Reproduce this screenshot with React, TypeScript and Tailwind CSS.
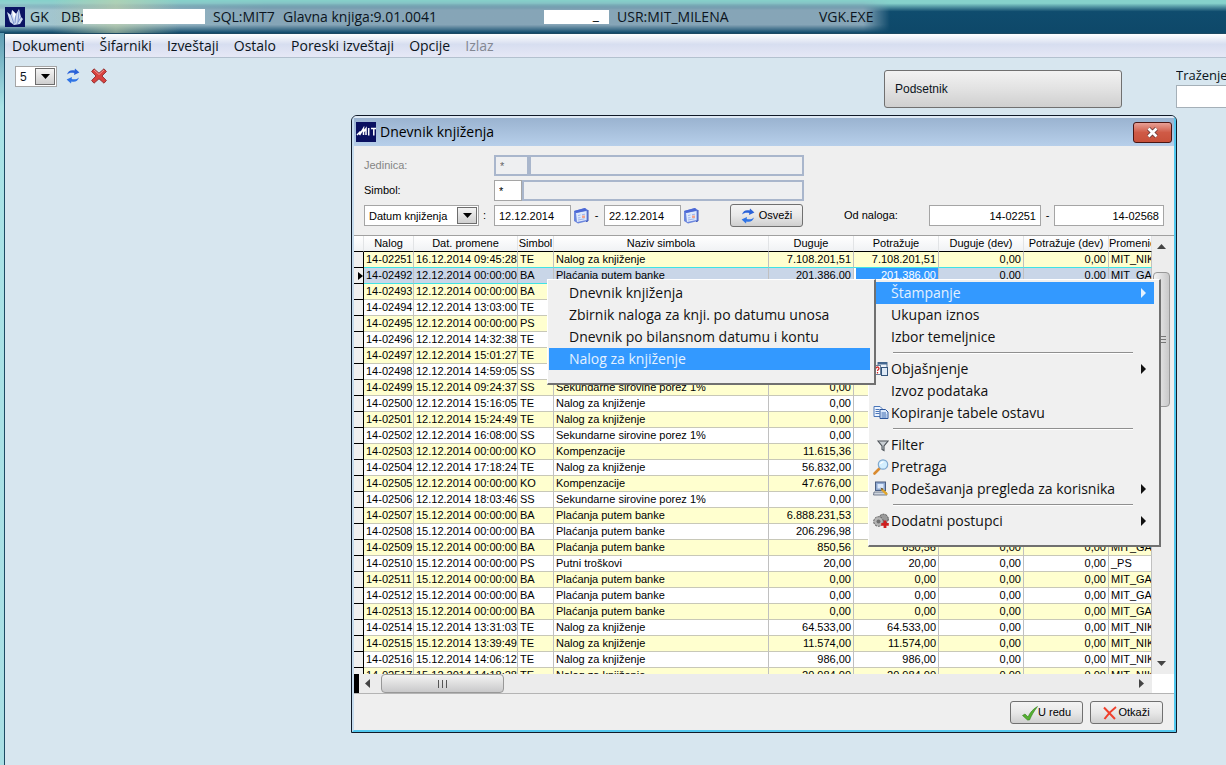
import type { ReactNode } from 'react';

interface LedgerRow {
  id: string;
  date: string;
  code: string;
  amount: string;
}

const NAMES: Record<string, string> = {
  TE: 'Nalog za knjiženje',
  BA: 'Plaćanja putem banke',
  PS: 'Putni troškovi',
  SS: 'Sekundarne sirovine porez 1%',
  KO: 'Kompenzacije',
};

const USERS: Record<string, string> = {
  TE: 'MIT_NIKOLA',
  BA: 'MIT_GAGA',
  PS: '_PS',
  SS: 'MIT_NIKOLA',
  KO: 'MIT_NIKOLA',
};

const rows: LedgerRow[] = [
  { id: '14-02251', date: '16.12.2014 09:45:28', code: 'TE', amount: '7.108.201,51' },
  { id: '14-02492', date: '12.12.2014 00:00:00', code: 'BA', amount: '201.386,00' },
  { id: '14-02493', date: '12.12.2014 00:00:00', code: 'BA', amount: '0,00' },
  { id: '14-02494', date: '12.12.2014 13:03:00', code: 'TE', amount: '0,00' },
  { id: '14-02495', date: '12.12.2014 00:00:00', code: 'PS', amount: '0,00' },
  { id: '14-02496', date: '12.12.2014 14:32:38', code: 'TE', amount: '0,00' },
  { id: '14-02497', date: '12.12.2014 15:01:27', code: 'TE', amount: '0,00' },
  { id: '14-02498', date: '12.12.2014 14:59:05', code: 'SS', amount: '0,00' },
  { id: '14-02499', date: '15.12.2014 09:24:37', code: 'SS', amount: '0,00' },
  { id: '14-02500', date: '12.12.2014 15:16:05', code: 'TE', amount: '0,00' },
  { id: '14-02501', date: '12.12.2014 15:24:49', code: 'TE', amount: '0,00' },
  { id: '14-02502', date: '12.12.2014 16:08:00', code: 'SS', amount: '0,00' },
  { id: '14-02503', date: '12.12.2014 00:00:00', code: 'KO', amount: '11.615,36' },
  { id: '14-02504', date: '12.12.2014 17:18:24', code: 'TE', amount: '56.832,00' },
  { id: '14-02505', date: '12.12.2014 00:00:00', code: 'KO', amount: '47.676,00' },
  { id: '14-02506', date: '12.12.2014 18:03:46', code: 'SS', amount: '0,00' },
  { id: '14-02507', date: '15.12.2014 00:00:00', code: 'BA', amount: '6.888.231,53' },
  { id: '14-02508', date: '15.12.2014 00:00:00', code: 'BA', amount: '206.296,98' },
  { id: '14-02509', date: '15.12.2014 00:00:00', code: 'BA', amount: '850,56' },
  { id: '14-02510', date: '15.12.2014 00:00:00', code: 'PS', amount: '20,00' },
  { id: '14-02511', date: '15.12.2014 00:00:00', code: 'BA', amount: '0,00' },
  { id: '14-02512', date: '15.12.2014 00:00:00', code: 'BA', amount: '0,00' },
  { id: '14-02513', date: '15.12.2014 00:00:00', code: 'BA', amount: '0,00' },
  { id: '14-02514', date: '15.12.2014 13:31:03', code: 'TE', amount: '64.533,00' },
  { id: '14-02515', date: '15.12.2014 13:39:49', code: 'TE', amount: '11.574,00' },
  { id: '14-02516', date: '15.12.2014 14:06:12', code: 'TE', amount: '986,00' },
  { id: '14-02517', date: '15.12.2014 14:18:28', code: 'TE', amount: '20.984,00' },
];

const mainMenu = ['Dokumenti', 'Šifarniki', 'Izveštaji', 'Ostalo', 'Poreski izveštaji', 'Opcije'];

const RefreshIcon = () => (
  <svg viewBox="0 0 14 16" className="h-4 w-3.5 shrink-0" aria-hidden="true">
    <path d="M1 6.5C2 3 5 1.6 8.6 2.6L9 .6 13.4 4.4 8 7l.3-2C5.600 4.200 3 4.700 1 6.500Z" fill="#2a62d8" />
    <path d="M13 9.500C12 13 9 14.400 5.400 13.400L5 15.400.6 11.600 6 9l-.3 2c2.700.8 5.300.3 7.300-1.500Z" fill="#2f74e6" />
  </svg>
);

const CalendarIcon = () => (
  <svg viewBox="0 0 16 17" className="h-[17px] w-4" aria-hidden="true">
    <path d="M1 4 12 1l3 2v11L5 16.500 1 14Z" fill="#6c86dd" />
    <path d="M3 6 13.500 4v9L4 15Z" fill="#dfe9fc" />
    <path d="M1 4 12 1l2 2.400L3 6Z" fill="#4c68d6" />
    <path d="M5 8.500 7.500 8m1.500-.3 3-.5M5 11l2.500-.4M5 13l6.500-1.200" stroke="#9db5ee" />
    <rect x="9" y="8.500" width="3" height="2.500" fill="#f3a38e" />
    <path d="M15 3v11l-2 .6" stroke="#3f56b8" fill="none" />
  </svg>
);

const CrystalLogo = () => (
  <svg viewBox="0 0 20 20" className="h-5 w-5 shrink-0" aria-hidden="true">
    <rect width="20" height="20" fill="#0b1463" />
    <path d="M2 5l4 3 1-5 4 4 3-5 2 8 2 2-3 5-6 1-4-3Z" fill="#cfdcf2" />
    <path d="M6 8l3 9M11 7l-1 9M14 4l-1 11M16 10l-4 7" stroke="#7f96cf" fill="none" />
    <path d="M7 3l4 4-2 5Z" fill="#fff" />
  </svg>
);

const MitLogo = () => (
  <svg viewBox="0 0 20 20" className="h-5 w-5 shrink-0" aria-hidden="true">
    <rect width="20" height="20" fill="#0a1060" />
    <path d="M1 13 4.500 9.500M3.500 13 7.500 6.500V13M7.500 10l2.500-3.500V13M12.700 6v7.500M15 6.500h5M17.800 6.500v7" stroke="#fff" strokeWidth="1.500" fill="none" />
  </svg>
);

const GlossyCross = () => (
  <svg viewBox="0 0 16 16" className="h-4 w-4" aria-hidden="true">
    <path d="M3 .8 8 5.200 13 .8 15.400 3.500 11 8l4.400 4.500L13 15.200 8 10.800 3 15.200.6 12.500 5 8 .6 3.500Z" fill="#d8423f" stroke="#8f2a2a" strokeWidth=".9" />
    <path d="M3 2 8 6.500 13 2" stroke="#f2918b" fill="none" />
  </svg>
);

const CheckIcon = () => (
  <svg viewBox="0 0 16 16" className="h-4 w-4" aria-hidden="true">
    <path d="M.5 10.500 3 9l3 3C8 7.500 11 4 15.500 1.500 12 6 9.500 10.500 7.500 15H5.500Z" fill="#55b030" stroke="#33801c" strokeWidth=".6" />
  </svg>
);

const RedCross = () => (
  <svg viewBox="0 0 14 14" className="h-3.5 w-3.5" aria-hidden="true">
    <path d="M1 1.500 12 13M13 1C9 4 5 8 1.500 13" stroke="#f0402c" strokeWidth="2" fill="none" />
  </svg>
);

const ExplainIcon = () => (
  <svg viewBox="0 0 16 16" className="h-4 w-4" aria-hidden="true">
    <rect x="5" y="1.500" width="9" height="9" fill="#eef4fb" stroke="#4f6f8f" />
    <rect x="5" y="1" width="9" height="2.500" fill="#44678f" />
    <rect x="1.500" y="4.500" width="6" height="9" fill="#fff" stroke="#6a7f98" />
    <path d="M3 7.500c0-2 3-2 3 0 0 1-1.500 1-1.500 2.500M4.500 11v1.500" stroke="#d02a2a" strokeWidth="1.300" fill="none" />
    <rect x="8.500" y="6.500" width="6" height="8" fill="#dfeaf6" stroke="#34557c" />
  </svg>
);

const CopyIcon = () => (
  <svg viewBox="0 0 16 16" className="h-4 w-4" aria-hidden="true">
    <path d="M1 1.500h6l2 2v8H1Z" fill="#eef5ff" stroke="#4b76b8" />
    <path d="M2.500 4.500h4M2.500 6.500h4M2.500 8.500h4" stroke="#4b76b8" />
    <path d="M7 4.500h5.500l2.500 2.500v6.500H7Z" fill="#dce9fb" stroke="#2c569c" />
    <path d="M8.500 8h4.500M8.500 10h5M8.500 12h5" stroke="#3a68b0" />
  </svg>
);

const FilterIcon = () => (
  <svg viewBox="0 0 16 16" className="h-4 w-4" aria-hidden="true">
    <path d="M5 4h10l-4 5v4.500l-2-1V9Z" fill="#c9ced3" stroke="#4c5258" strokeWidth="1.100" />
    <path d="M6 4.300h8" stroke="#8c9298" />
  </svg>
);

const SearchIcon = () => (
  <svg viewBox="0 0 16 16" className="h-4 w-4" aria-hidden="true">
    <path d="M1.500 14.500 6.500 9.500" stroke="#d98a2e" strokeWidth="2.600" strokeLinecap="round" />
    <circle cx="10" cy="5.500" r="4.700" fill="#d3efff" stroke="#7fa8cf" strokeWidth="1.200" />
    <path d="M7.500 5c.4-1.500 1.500-2.300 3-2.200" stroke="#fff" strokeWidth="1.200" fill="none" />
  </svg>
);

const SettingsIcon = () => (
  <svg viewBox="0 0 16 16" className="h-4 w-4" aria-hidden="true">
    <rect x="2.500" y="1" width="10" height="8.500" fill="#8ea8d0" stroke="#4a5d80" />
    <rect x="4.500" y="3" width="6" height="4.500" fill="#dbe8fb" />
    <path d="M1 11h12l1 3H.5Z" fill="#cfd5de" stroke="#59657a" strokeWidth=".8" />
    <path d="M8.500 8 14 13.500" stroke="#e3a628" strokeWidth="2.400" />
    <path d="M7.500 6.500 9 9.200l1.200-1.400Z" fill="#5a4a24" />
  </svg>
);

const GearsIcon = () => (
  <svg viewBox="0 0 16 16" className="h-4 w-4" aria-hidden="true">
    <circle cx="10.500" cy="6" r="4.800" fill="#9a9a9a" stroke="#4d4d4d" strokeDasharray="2 1" />
    <circle cx="5.500" cy="8.500" r="4.800" fill="#b5b5b5" stroke="#555" strokeDasharray="2 1" />
    <circle cx="5.500" cy="8.500" r="2" fill="#707070" />
    <path d="M12 7.500v7.500M8.300 11.300h7.500" stroke="#cf1f1f" strokeWidth="2.800" />
  </svg>
);

const CaretButton = () => (
  <span className="pointer-events-none absolute inset-y-0.5 right-0.5 flex w-5 items-center justify-center border border-[#6d6d6d] bg-gradient-to-b from-[#f4f4f4] to-[#cfcfcf]">
    <svg viewBox="0 0 9 5" className="h-[5px] w-[9px]" aria-hidden="true">
      <path d="M0 0h9L4.500 5Z" fill="#000" />
    </svg>
  </span>
);

interface MenuEntryProps {
  label: string;
  icon?: ReactNode;
  active?: boolean;
  arrow?: boolean;
}

const MenuEntry = ({ label, icon, active, arrow }: MenuEntryProps) => (
  <button
    type="button"
    role="menuitem"
    className={`flex h-[22px] w-full items-center pr-2 text-left ${
      active ? 'bg-[#3399ff] text-[#e4f1ff]' : 'text-[#111111]'
    }`}
  >
    <span className="flex w-5 shrink-0 items-center pl-0.5">{icon}</span>
    <span className="grow whitespace-nowrap">{label}</span>
    {arrow && (
      <svg viewBox="0 0 5 10" className="h-2.5 w-[5px] fill-current" aria-hidden="true">
        <path d="M0 0v10l5-5Z" />
      </svg>
    )}
  </button>
);

const MenuLine = () => <div role="separator" className="my-[4px] mr-[21px] ml-[22px] h-0.5 border-t border-[#8f8f8f] bg-white" />;

const fieldBox = 'h-[21px] border border-[#a5a5a5] bg-white px-1 text-[11px] leading-4';
const lockedBox = 'h-[21px] border-2 border-[#a9b6cc] bg-[#eeeff1] px-1 text-[11px] leading-4';
const pushButton =
  'flex h-[23px] items-center justify-center rounded-[3px] border border-[#707070] bg-gradient-to-b from-[#f4f4f4] via-[#e8e8e8] to-[#cfcfcf] text-[11px]';

const DialogFilters = () => (
  <form className="flex flex-col gap-1 px-2.5 pt-[9px] pb-[9px] text-[11px]">
    <div className="flex h-[21px] items-center">
      <label htmlFor="unit" className="w-[130px] text-[#858585]">Jedinica:</label>
      <input id="unit" disabled defaultValue="*" className={`${lockedBox} w-[35px] text-[#666666]`} />
      <input aria-label="Naziv jedinice" disabled className={`${lockedBox} w-[275px]`} />
    </div>
    <div className="flex h-[21px] items-center">
      <label htmlFor="symbol" className="w-[130px]">Simbol:</label>
      <input id="symbol" defaultValue="*" className={`${fieldBox} w-7`} />
      <input aria-label="Naziv simbola" disabled className={`${lockedBox} w-[282px]`} />
    </div>
    <div className="flex h-[21px] items-center">
      <div className="flex w-[130px] items-center gap-1">
        <div className="relative">
          <select aria-label="Vrsta datuma" className={`${fieldBox} block w-[115px] appearance-none`}>
            <option>Datum knjiženja</option>
          </select>
          <CaretButton />
        </div>
        <span>:</span>
      </div>
      <input aria-label="Datum od" defaultValue="12.12.2014" className={`${fieldBox} w-[77px]`} />
      <button type="button" aria-label="Izaberi datum od" className="ml-0.5"><CalendarIcon /></button>
      <span className="w-[15px] text-center">-</span>
      <input aria-label="Datum do" defaultValue="22.12.2014" className={`${fieldBox} w-[77px]`} />
      <button type="button" aria-label="Izaberi datum do" className="ml-0.5"><CalendarIcon /></button>
      <button type="button" className={`${pushButton} ml-[31px] w-[73px] gap-1`}>
        <RefreshIcon />
        Osveži
      </button>
      <label htmlFor="order-from" className="ml-auto w-[85px]">Od naloga:</label>
      <input id="order-from" defaultValue="14-02251" className={`${fieldBox} w-28 text-right`} />
      <span className="w-[13px] text-center">-</span>
      <input aria-label="Do naloga" defaultValue="14-02568" className={`${fieldBox} w-[110px] text-right`} />
    </div>
  </form>
);

const LedgerTable = () => (
  <table className="w-[798px] table-fixed border-separate border-spacing-0 text-[11px] leading-[15px] whitespace-nowrap">
    <colgroup>
      <col className="w-2.5" />
      <col className="w-[50px]" />
      <col className="w-[104px]" />
      <col className="w-9" />
      <col className="w-[215px]" />
      <col className="w-[85px]" />
      <col className="w-[85px]" />
      <col className="w-[85px]" />
      <col className="w-[85px]" />
      <col className="w-[43px]" />
    </colgroup>
    <thead>
      <tr className="h-4 [&>th]:overflow-hidden [&>th]:border-r [&>th]:border-b [&>th]:border-r-[#e2e4e6] [&>th]:border-b-black [&>th]:bg-gradient-to-b [&>th]:from-white [&>th]:to-[#f0f2f4] [&>th]:p-0 [&>th]:font-normal">
        <th aria-label="Red" />
        <th>Nalog</th>
        <th>Dat. promene</th>
        <th>Simbol</th>
        <th>Naziv simbola</th>
        <th>Duguje</th>
        <th>Potražuje</th>
        <th>Duguje (dev)</th>
        <th>Potražuje (dev)</th>
        <th className="text-left">Promenio</th>
      </tr>
    </thead>
    <tbody>
      {rows.map((row, i) => {
        const selected = i === 1;
        const tone = selected
          ? 'bg-[#c9d6e8] [&>td]:border-b-[#3fe3e6]'
          : i === 0
            ? 'bg-[#ffffcf] [&>td]:border-b-[#3fe3e6]'
            : i % 2 === 0
              ? 'bg-[#ffffcf] [&>td]:border-b-[#c8c8b8]'
              : 'bg-white [&>td]:border-b-[#c8c8b8]';
        return (
          <tr key={row.id} className={`h-4 [&>td]:overflow-hidden [&>td]:border-r [&>td]:border-b [&>td]:border-r-[#c0c0c0] [&>td]:px-0.5 [&>td]:py-0 ${tone}`}>
            <th scope="row" aria-label={row.id} className="border-r border-b border-black bg-[#f0f0f0] p-0">
              {selected && (
                <svg viewBox="0 0 5 8" className="ml-auto h-2 w-[5px]" aria-hidden="true">
                  <path d="M0 0v8l5-4Z" />
                </svg>
              )}
            </th>
            <td>{row.id}</td>
            <td>{row.date}</td>
            <td>{row.code}</td>
            <td>{NAMES[row.code]}</td>
            <td className="text-right">{row.amount}</td>
            <td className={`text-right ${selected ? 'border-l-2 border-l-white bg-[#3399ff] text-white' : ''}`}>{row.amount}</td>
            <td className="text-right">0,00</td>
            <td className="text-right">0,00</td>
            <td>{USERS[row.code]}</td>
          </tr>
        );
      })}
    </tbody>
  </table>
);

const VerticalScroll = () => (
  <div className="flex w-[19px] flex-col items-center justify-between bg-[#ededed] py-2">
    <svg viewBox="0 0 9 5" className="h-[5px] w-[9px]" aria-hidden="true"><path d="M0 5h9L4.500 0Z" fill="#444" /></svg>
    <div className="mt-[23px] flex h-[135px] w-[17px] flex-col items-center justify-center gap-0.5 rounded-sm border border-[#989898] bg-gradient-to-r from-[#f3f3f3] to-[#c9c9ca]">
      <span className="h-px w-2 bg-[#777777]" />
      <span className="h-px w-2 bg-[#777777]" />
      <span className="h-px w-2 bg-[#777777]" />
    </div>
    <span className="grow" />
    <svg viewBox="0 0 9 5" className="h-[5px] w-[9px]" aria-hidden="true"><path d="M0 0h9L4.500 5Z" fill="#444" /></svg>
  </div>
);

const HorizontalScroll = () => (
  <div className="flex h-5 border-b border-[#b4b4b4] bg-white">
    <div className="flex w-[798px] items-center bg-[#ececec]">
      <span className="h-full w-[5px] bg-black" />
      <svg viewBox="0 0 5 9" className="ml-1.5 h-[9px] w-[5px]" aria-hidden="true"><path d="M5 0v9L0 4.500Z" fill="#444" /></svg>
      <div className="ml-[11px] flex h-[19px] w-[123px] items-center justify-center gap-[3px] rounded-sm border border-[#989898] bg-gradient-to-b from-[#f3f3f3] to-[#c9c9ca]">
        <span className="h-2 w-px bg-[#555555]" />
        <span className="h-2 w-px bg-[#555555]" />
        <span className="h-2 w-px bg-[#555555]" />
      </div>
      <svg viewBox="0 0 5 9" className="mr-2 ml-auto h-[9px] w-[5px]" aria-hidden="true"><path d="M0 0v9l5-4.500Z" fill="#444" /></svg>
    </div>
  </div>
);

const JournalDialog = () => (
  <section
    role="dialog"
    aria-labelledby="journal-title"
    className="absolute top-[115px] left-[351px] w-[826px] rounded-t-md border border-[#101a28] bg-[#b5cde8] font-['Liberation_Sans',Arial,sans-serif] text-black"
  >
    <div className="rounded-t-[5px] border-2 border-t-[#dfeaf5] border-r-[#52c8ee] border-b-[#52c8ee] border-l-[#c6dcee]">
      <header className="flex h-7 items-center bg-gradient-to-b from-[#9ab3d0] to-[#b7cfea] pr-0.5 pl-0.5">
        <MitLogo />
        <h1 id="journal-title" className="ml-1 font-['Open_Sans','Noto_Sans',sans-serif] text-sm">Dnevnik knjiženja</h1>
        <button
          type="button"
          aria-label="Zatvori"
          className="ml-auto flex h-[21px] w-[39px] items-center justify-center rounded-[3px] border border-[#4a1512] bg-gradient-to-b from-[#e8a096] via-[#cf5a46] via-50% to-[#c8503a]"
        >
          <svg viewBox="0 0 13 11" className="h-[11px] w-[13px]" aria-hidden="true">
            <path d="M2.500 1.500 10.500 9.500M10.500 1.500 2.500 9.500" stroke="#5c3030" strokeWidth="4.200" />
            <path d="M2.500 1.500 10.500 9.500M10.500 1.500 2.500 9.500" stroke="#fff" strokeWidth="2.800" />
          </svg>
        </button>
      </header>
      <div className="bg-[#efefef]">
        <DialogFilters />
        <div className="flex h-[439px] border-t border-[#a0a0a0]">
          <div className="w-[798px] shrink-0 overflow-hidden"><LedgerTable /></div>
          <VerticalScroll />
        </div>
        <HorizontalScroll />
        <footer className="flex justify-end gap-[7px] pt-[7px] pr-[11px] pb-1.5">
          <button type="button" className={`${pushButton} w-[73px]`}><CheckIcon />U redu</button>
          <button type="button" className={`${pushButton} w-[73px] gap-px`}><RedCross />Otkaži</button>
        </footer>
      </div>
    </div>
  </section>
);

const popup = "absolute border-t border-r-2 border-b-2 border-l border-t-white border-r-[#707070] border-b-[#707070] border-l-white bg-[#f0f0f0] text-sm font-['Open_Sans','Noto_Sans',sans-serif]";

const ContextMenu = () => (
  <div role="menu" aria-label="Radnje" className={`${popup} top-[279px] left-[868px] w-[293px] pt-0.5 pr-[5px] pb-[13px] pl-0.5`}>
    <MenuEntry label="Štampanje" active arrow />
    <MenuEntry label="Ukupan iznos" />
    <MenuEntry label="Izbor temeljnice" />
    <MenuLine />
    <MenuEntry label="Objašnjenje" icon={<ExplainIcon />} arrow />
    <MenuEntry label="Izvoz podataka" />
    <MenuEntry label="Kopiranje tabele ostavu" icon={<CopyIcon />} />
    <MenuLine />
    <MenuEntry label="Filter" icon={<FilterIcon />} />
    <MenuEntry label="Pretraga" icon={<SearchIcon />} />
    <MenuEntry label="Podešavanja pregleda za korisnika" icon={<SettingsIcon />} arrow />
    <MenuLine />
    <MenuEntry label="Dodatni postupci" icon={<GearsIcon />} arrow />
  </div>
);

const PrintMenu = () => (
  <div role="menu" aria-label="Štampanje" className={`${popup} top-[279px] left-[547px] w-[329px] pt-0.5 pr-1 pb-[13px] pl-px`}>
    <MenuEntry label="Dnevnik knjiženja" />
    <MenuEntry label="Zbirnik naloga za knji. po datumu unosa" />
    <MenuEntry label="Dnevnik po bilansnom datumu i kontu" />
    <MenuEntry label="Nalog za knjiženje" active />
  </div>
);

const TitleBar = () => (
  <header className="relative h-[33px] bg-gradient-to-b from-[#86d2cb] from-10% via-[#0f4c6e] via-35% to-[#0e4869] text-sm">
    <div className="absolute inset-y-0 left-0 w-[890px] bg-gradient-to-r from-[#a9cdd4] via-[#86a5b7] via-30% to-[#86a5b7] mask-r-from-97% mask-t-from-70% mask-b-from-75%" />
    <div className="absolute inset-y-0 left-[52px] w-32 bg-gradient-to-r from-transparent via-[#c5d3a8] to-transparent opacity-60" />
    <div className="relative flex h-[33px] items-center pl-[5px] whitespace-nowrap">
      <CrystalLogo />
      <span className="ml-[5px] w-[31px]">GK</span>
      <span className="w-[22px]">DB:</span>
      <span className="h-[15px] w-[122px] bg-white" />
      <span className="ml-2 w-[70px]">SQL:MIT7</span>
      <span className="w-[261px]">Glavna knjiga:9.01.0041</span>
      <span className="h-3.5 w-[65px] overflow-hidden bg-white pr-2.5 text-right leading-[10px]">_</span>
      <span className="ml-2 w-[202px]">USR:MIT_MILENA</span>
      <span>VGK.EXE</span>
    </div>
  </header>
);

const App = () => {
  return (
    <div className="relative flex h-screen flex-col overflow-hidden bg-[#d7e6ef] font-['Open_Sans','Noto_Sans',sans-serif] text-[#0b1420]">
      <TitleBar />
      <div className="flex grow bg-gradient-to-b from-[#5f9db4] via-[#a9e3e6] via-10% to-[#a9dfe4] pl-1">
        <div className="flex min-w-0 grow flex-col border-t border-l border-[#1d4a63] bg-[#d7e6ef]">
          <nav className="flex h-6 items-center gap-[15px] border-b border-[#b3c1cf] bg-gradient-to-b from-white via-[#d7def0] via-45% to-[#e6e8f6] pl-[7px] text-sm whitespace-nowrap">
            {mainMenu.map((item) => (
              <button key={item} type="button">{item}</button>
            ))}
            <button type="button" disabled className="text-[#838792]">Izlaz</button>
          </nav>
          <main className="flex items-start pt-2 pl-2.5">
            <div className="relative">
              <select
                aria-label="Broj"
                className="block h-[21px] w-[42px] appearance-none border border-[#a5a5a5] bg-white pl-1 font-['Liberation_Sans',Arial,sans-serif] text-xs"
              >
                <option>5</option>
              </select>
              <CaretButton />
            </div>
            <button type="button" aria-label="Osveži" className="mt-0.5 ml-[9px]"><RefreshIcon /></button>
            <button type="button" aria-label="Obriši" className="mt-0.5 ml-[11px]"><GlossyCross /></button>
            <button
              type="button"
              className="mt-1 mr-[54px] ml-auto h-[38px] w-[238px] rounded-[3px] border border-[#707070] bg-gradient-to-b from-[#f2f2f2] via-[#e2e2e2] to-[#cfcfcf] pl-2.5 text-left font-['Liberation_Sans',Arial,sans-serif] text-xs"
            >
              Podsetnik
            </button>
            <div className="w-[50px] shrink-0 overflow-hidden">
              <label htmlFor="find" className="block text-[13px] leading-[19px] whitespace-nowrap">Traženje</label>
              <input id="find" className="block h-[23px] w-20 border border-[#a5b0b8] bg-white px-1 text-xs" />
            </div>
          </main>
        </div>
      </div>
      <JournalDialog />
      <ContextMenu />
      <PrintMenu />
    </div>
  );
};

export default App;
